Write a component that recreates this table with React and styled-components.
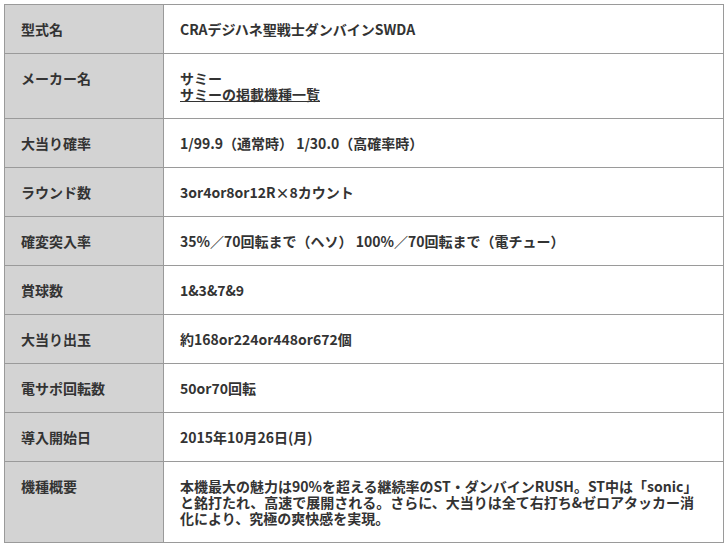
import React from 'react'
import styled, { createGlobalStyle } from 'styled-components'

const Global = createGlobalStyle`
body {
  margin: 0;
  background: #fff;
  font-family: "Noto Sans CJK JP", "Noto Sans", sans-serif;
}
`;

const Wrap = styled.div`
padding: 4px;
`;

const Table = styled.table`
width: 720px;
border-collapse: collapse;
border: 1px solid #9a9a9a;
color: #333;
font-size: 14px;
font-weight: 700;
line-height: 16px;
`;

const Head = styled.th`
width: 126px;
background-color: #d3d3d3;
border: 1px solid #9a9a9a;
padding: 16px 16px;
text-align: left;
vertical-align: top;
font-weight: 700;
`;

const Cell = styled.td`
border: 1px solid #9a9a9a;
padding: 16px 16px;
vertical-align: top;
background: #fff;
`;

const Link = styled.a`
color: #333;
text-decoration: underline;
`;

const rows = [
  ["型式名", "CRAデジハネ聖戦士ダンバインSWDA"],
  ["メーカー名", <>サミー<br /><Link href="#">サミーの掲載機種一覧</Link></>],
  ["大当り確率", "1/99.9（通常時） 1/30.0（高確率時）"],
  ["ラウンド数", "3or4or8or12R×8カウント"],
  ["確変突入率", "35%／70回転まで（ヘソ） 100%／70回転まで（電チュー）"],
  ["賞球数", "1&3&7&9"],
  ["大当り出玉", "約168or224or448or672個"],
  ["電サポ回転数", "50or70回転"],
  ["導入開始日", "2015年10月26日(月)"],
  ["機種概要", "本機最大の魅力は90%を超える継続率のST・ダンバインRUSH。ST中は「sonic」と銘打たれ、高速で展開される。さらに、大当りは全て右打ち&ゼロアタッカー消化により、究極の爽快感を実現。"],
];

function App() {
  return (
    <Wrap>
      <Global />
      <Table>
        <tbody>
          {rows.map(([k, v], i) => (
            <tr key={i}>
              <Head>{k}</Head>
              <Cell>{v}</Cell>
            </tr>
          ))}
        </tbody>
      </Table>
    </Wrap>
  )
}

export default App
